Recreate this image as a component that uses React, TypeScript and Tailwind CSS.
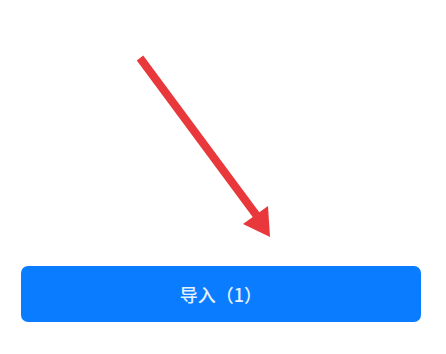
const App = () => {
  return (
    <div className="w-[446px] h-[354px] bg-white flex flex-col" style={{ fontFamily: '"Noto Sans CJK SC", "Noto Sans", sans-serif' }}>
      <div className="h-[266px] w-full">
        <svg viewBox="0 0 446 266" className="w-full h-full">
          <line x1="140" y1="58" x2="257" y2="216" stroke="#e8383b" strokeWidth="8" />
          <polygon points="243,224 268,206 270,237" fill="#e8383b" />
        </svg>
      </div>
      <button className="ml-[21px] w-[400px] h-[56px] rounded-[7px] bg-[#0a7cff] text-[18px] font-medium text-white/90 flex items-center justify-center">
        导入（1）
      </button>
    </div>
  );
};

export default App;
